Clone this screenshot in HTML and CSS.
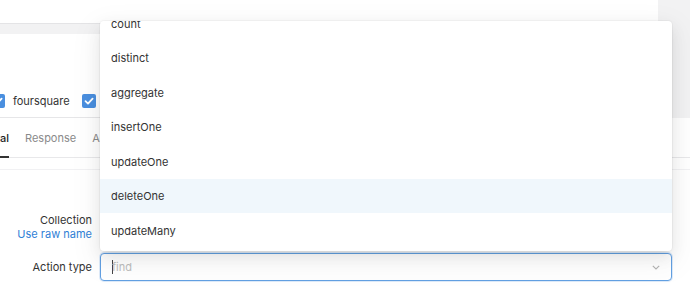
FILE: index.html
```html
<!DOCTYPE html>
<html>
<head>
<meta charset="utf-8">
<link rel="stylesheet" href="styles.css">
</head>
<body>
<div class="page">
  <div class="upper">
    <div class="topcard"></div>
    <div class="panel">
      <div class="checks">
        <span class="cb"><svg viewBox="0 0 14 14" width="14" height="14"><path d="M3.5 7.2 L6 9.6 L10.6 4.6" fill="none" stroke="#fff" stroke-width="1.8" stroke-linecap="round" stroke-linejoin="round"/></svg></span>
        <span class="cb-label">foursquare</span>
        <span class="cb"><svg viewBox="0 0 14 14" width="14" height="14"><path d="M3.5 7.2 L6 9.6 L10.6 4.6" fill="none" stroke="#fff" stroke-width="1.8" stroke-linecap="round" stroke-linejoin="round"/></svg></span>
        <span class="cb-label">tips</span>
      </div>
    </div>
  </div>
  <div class="tabs">
    <div class="tab active">General</div>
    <div class="tab">Response</div>
    <div class="tab">Advanced</div>
  </div>
  <div class="subline"></div>
  <div class="form">
    <div class="label label-collection">
      <span>Collection</span>
      <span class="link">Use raw name</span>
    </div>
    <div class="field-placeholder"></div>
    <div class="label label-action">Action type</div>
    <div class="select">
      <span class="caret"></span><span class="placeholder">find</span>
      <svg class="chevron" viewBox="0 0 8 5" width="8" height="5"><path d="M0.8 0.8 L4 3.9 L7.2 0.8" fill="none" stroke="#b3b3b3" stroke-width="1.1"/></svg>
    </div>
  </div>
  <div class="dropdown">
    <ul class="options">
      <li>count</li>
      <li>distinct</li>
      <li>aggregate</li>
      <li>insertOne</li>
      <li>updateOne</li>
      <li class="hover">deleteOne</li>
      <li>updateMany</li>
      <li>deleteMany</li>
    </ul>
  </div>
</div>
</body>
</html>
```
FILE: styles.css
```css
* { box-sizing: border-box; }
html, body { margin: 0; padding: 0; }
body {
  width: 690px;
  height: 290px;
  overflow: hidden;
  background: #fff;
  font-family: Inter, "Noto Sans", sans-serif;
  font-size: 11px;
  color: #333;
}
.page {
  position: relative;
  width: 690px;
  height: 290px;
  overflow: hidden;
}
.upper {
  background: #f2f2f3;
  display: flex;
  flex-direction: column;
}
.topcard {
  width: 658px;
  height: 24px;
  background: #fff;
  border-bottom: 1px solid #e4e4e6;
}
.panel {
  margin-top: 10px;
  width: 672px;
  height: 84px;
  background: #fff;
  border-bottom: 1px solid #e6e6e8;
  display: flex;
  align-items: flex-end;
}
.checks {
  display: flex;
  align-items: center;
  margin-left: -9px;
  height: 14px;
  margin-bottom: 9px;
}
.cb {
  width: 14px;
  height: 14px;
  border-radius: 2px;
  background: #4a8fdf;
  display: inline-flex;
}
.cb-label {
  margin-left: 8px;
  margin-right: 12px;
  color: #333;
}
.tabs {
  display: flex;
  height: 40px;
  border-bottom: 1px solid #e8e8ea;
  margin-left: -32px;
  gap: 16px;
}
.tab {
  display: flex;
  align-items: center;
  color: #8a8a8a;
  height: 40px;
}
.tab.active {
  color: #222;
  font-weight: 500;
  border-bottom: 2px solid #333;
  padding-top: 2px;
}
.subline {
  margin-top: 11px;
  height: 1px;
  background: #f1f1f3;
}
.form {
  display: grid;
  grid-template-columns: 92px 572px;
  column-gap: 8px;
  row-gap: 12px;
  padding-top: 43px;
}
.label {
  text-align: right;
  color: #333;
}
.label-collection {
  display: flex;
  flex-direction: column;
  align-items: flex-end;
  line-height: 14px;
  height: 28px;
}
.link { color: #2f7fd6; }
.field-placeholder { height: 28px; }
.label-action {
  display: flex;
  align-items: center;
  justify-content: flex-end;
  height: 28px;
}
.select {
  height: 28px;
  border: 1px solid #62a0e2;
  border-radius: 4px;
  box-shadow: 0 0 0 1px rgba(98, 160, 226, 0.22);
  display: flex;
  align-items: center;
  padding-left: 11px;
  padding-right: 10px;
  background: #fff;
}
.caret {
  width: 1px;
  height: 14px;
  background: #444;
  margin-right: -1px;
}
.placeholder {
  color: #bdbdbd;
  flex: 1;
}
.chevron { margin-right: 1px; margin-top: 1px; }
.dropdown {
  position: absolute;
  left: 100px;
  top: 21px;
  width: 572px;
  height: 230px;
  background: #fff;
  border-radius: 4px;
  overflow: hidden;
  box-shadow: 0 0 0 1px rgba(0,0,0,.03), 0 3px 6px -4px rgba(0,0,0,.14), 0 6px 16px 0 rgba(0,0,0,.08), 0 9px 28px 8px rgba(0,0,0,.04);
}
.options {
  list-style: none;
  margin: -14.75px 0 0 0;
  padding: 0;
}
.options li {
  height: 34.5px;
  display: flex;
  align-items: center;
  padding-left: 11px;
  color: #333;
}
.options li.hover { background: #f0f7fc; }
```
